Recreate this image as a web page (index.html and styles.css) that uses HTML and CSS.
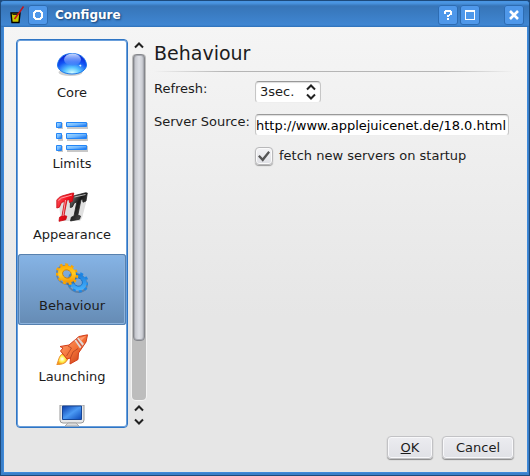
FILE: index.html
```html
<!DOCTYPE html>
<html lang="en">
<head>
<meta charset="utf-8">
<title>Configure</title>
<link rel="stylesheet" href="styles.css">
</head>
<body>
<div class="window">
  <header class="titlebar">
    <svg class="app-icon" width="16" height="18" viewBox="0 0 16 18">
      <path d="M2 7h9l-1 9.500H3z" fill="#c8c400" stroke="#000" stroke-width="1.4"/>
      <path d="M3.500 8.500h6" stroke="#222"/>
      <path d="M14.500 .5 10 7l-4.500 6" fill="none" stroke="#c4141c" stroke-width="1.500"/>
    </svg>
    <button class="tb-button" type="button">
      <svg width="20" height="20" viewBox="0 0 20 20" shape-rendering="crispEdges"><path d="M7 5h6v1h1v1h1v6h-1v1h-1v1H7v-1H6v-1H5V7h1V6h1zM8 7v1H7v4h1v1h4v-1h1V8h-1V7z" fill="#fff" fill-rule="evenodd"/></svg>
    </button>
    <h1 class="title">Configure</h1>
    <button class="tb-button" type="button">
      <svg width="20" height="20" viewBox="0 0 20 20" shape-rendering="crispEdges"><path d="M7 5h6v1h1v4h-2v1h-1v1H9v-2h2V9h1V7H8v2H6V6h1zM9 13h2v2H9z" fill="#fff"/></svg>
    </button>
    <button class="tb-button" type="button">
      <svg width="20" height="20" viewBox="0 0 20 20" shape-rendering="crispEdges"><path d="M5 5h10v10H5zM6 7v7h8V7z" fill="#fff" fill-rule="evenodd"/></svg>
    </button>
    <button class="tb-button tb-close" type="button">
      <svg width="20" height="20" viewBox="0 0 20 20"><path d="m6 6 8 8m0-8-8 8" stroke="#fff" stroke-width="2.600"/></svg>
    </button>
  </header>

  <main class="client">
    <div class="body">
      <div class="sidebar">
        <nav class="pages">
          <a class="page" href="#core">
            <svg width="32" height="32" viewBox="0 0 32 32">
              <defs>
                <radialGradient id="orb" cx=".5" cy=".95" r=".9"><stop offset="0" stop-color="#d8ffff"/><stop offset=".3" stop-color="#57c4ff"/><stop offset=".65" stop-color="#1252f4"/><stop offset="1" stop-color="#0a1cd0"/></radialGradient>
                <linearGradient id="orbTop" x2="0" y2="1"><stop offset="0" stop-color="#c9dcff"/><stop offset="1" stop-color="#3f78fb" stop-opacity=".5"/></linearGradient>
              </defs>
              <ellipse cx="14.500" cy="22.500" rx="12" ry="3.500" fill="#bbb" opacity=".7"/>
              <path d="M1.500 15C2 8 8 3.500 16 3.500s14 4.500 14.500 11.500c0 5-6 9-14.500 9s-14.500-4-14.500-9z" fill="url(#orb)" stroke="#1c78ea"/>
              <ellipse cx="16.500" cy="9.500" rx="8.500" ry="6" fill="url(#orbTop)"/>
              <path d="M23 15.500l1.500-1 1 1.200-1 1z" fill="#d6ecff"/>
            </svg>
            <span>Core</span>
          </a>
          <a class="page" href="#limits">
            <svg width="32" height="32" viewBox="0 0 32 32">
              <defs><linearGradient id="bar" x2="1" y2="1"><stop offset="0" stop-color="#a8dcff"/><stop offset=".5" stop-color="#72b9ff"/><stop offset="1" stop-color="#0868ee"/></linearGradient></defs>
              <path d="M2 2h5v6H2zM11 2h21v6H11zM2 14h5v6H2zM11 14h21v6H11zM2 25h5v6H2zM11 25h21v6H11z" fill="#c8c8c8"/>
              <g fill="url(#bar)" stroke="#2486f6"><path d="M.5 1.500h5v5h-5z"/><path d="M10.500 1.500h20v4h-20z"/><path d="M.5 12.500h5v5h-5z"/><path d="M10.500 12.500h20v5h-20z"/><path d="M.5 24.500h5v5h-5z"/><path d="M10.500 24.500h20v4h-20z"/></g>
            </svg>
            <span>Limits</span>
          </a>
          <a class="page" href="#appearance">
            <svg width="32" height="32" viewBox="0 0 32 32">
              <defs>
                <linearGradient id="red" x2="1" y2="1"><stop offset="0" stop-color="#ff6a72"/><stop offset=".4" stop-color="#f5121e"/><stop offset="1" stop-color="#b80008"/></linearGradient>
                <linearGradient id="black" x2="1" y2="1"><stop offset="0" stop-color="#999"/><stop offset=".4" stop-color="#181818"/><stop offset="1" stop-color="#666"/></linearGradient>
              </defs>
              <path d="m3 13 2-5 25-4v7l-4 15-2 3H5z" fill="#999" opacity=".3"/>
              <path d="M14.500 7.500Q16 4 19 3.500L29.500.8 31.300 1l-1.300 8-3 1.200-.5-3-1.500.6-3.200 15.400 2.700.8-1 3.200-9 1.800.8-3.800 2.700-1.200 2.800-14-2.500 1-2 4-2 .5z" fill="url(#black)" stroke="#222" stroke-width=".8"/>
              <path d="M.8 8Q3 4.800 6 4L15.500 1.300 17.800 1l-1.300 8.200-3 1.300-.5-3-2 .6-3 15.400 2.800.7-1 3.500L3 29.300l.5-4 2.500-1.200L8.500 9.500l-3 1-2.200 4.800-2.500.7z" fill="url(#red)" stroke="#c80812" stroke-width=".8"/>
              <path d="M2.500 8.500 5.500 6 16 3M9.500 8 7 24" fill="none" stroke="#ff9da2" stroke-width="1"/>
              <path d="m18.500 5 11-2.500" stroke="#bbb"/>
            </svg>
            <span>Appearance</span>
          </a>
          <a class="page page-current" href="#behaviour" aria-current="page">
            <svg width="32" height="32" viewBox="0 0 32 32">
              <defs>
                <linearGradient id="gold" x2="1" y2="1"><stop offset="0" stop-color="#ffa800"/><stop offset=".5" stop-color="#ffcc22"/><stop offset="1" stop-color="#f59200"/></linearGradient>
                <linearGradient id="blueGear" x2="1" y2="1"><stop offset="0" stop-color="#1678d8"/><stop offset="1" stop-color="#48b4ff"/></linearGradient>
              </defs>
              <g fill="none" transform="translate(22 19) rotate(35) scale(1 .86)">
                <circle r="10" cy="1.500" stroke="#345" stroke-opacity=".35" stroke-width="2"/>
                <circle r="10" pathLength="20" stroke="#1e86e4" stroke-width="3" stroke-dasharray="1 1"/>
                <circle r="6.800" stroke="url(#blueGear)" stroke-width="4.600"/>
                <circle r="4.600" stroke="#1268bc" stroke-width=".8"/>
              </g>
              <g fill="none" transform="translate(11 11) rotate(35) scale(1 .86)">
                <circle r="10" cy="1.500" stroke="#444" stroke-opacity=".35" stroke-width="2"/>
                <circle r="10.300" pathLength="22" stroke="#faa500" stroke-width="3" stroke-dasharray="1 1"/>
                <circle r="7" stroke="url(#gold)" stroke-width="5"/>
                <circle r="4.600" stroke="#c97800" stroke-width=".8"/>
              </g>
            </svg>
            <span>Behaviour</span>
          </a>
          <a class="page" href="#launching">
            <svg width="32" height="32" viewBox="0 0 32 32">
              <defs>
                <linearGradient id="hull" x2="1" y2="1"><stop offset="0" stop-color="#ffa878"/><stop offset=".5" stop-color="#f47238"/><stop offset="1" stop-color="#bc3010"/></linearGradient>
                <radialGradient id="flame"><stop offset="0" stop-color="#fff"/><stop offset=".55" stop-color="#fff04a"/><stop offset="1" stop-color="#f29a18"/></radialGradient>
              </defs>
              <path d="M.8 30.500C2.500 28 2.500 21.500 7 19.500l4.500 5.500c-1 4-5 5.500-10.700 5.500z" fill="url(#flame)" stroke="#ed8d2a"/>
              <path d="M4 12.500 13 11 23 2.500 31.500 .8 30 8l-7.500 11-.5 6.500-8 4.500 .5-6-3.500 1-6.500-8 2.500-3z" fill="url(#hull)" stroke="#d23c18" stroke-width="1"/>
              <path d="m18.500 6.500 5.500 8 4-4.500-5.500-6.500z" fill="#e0d8d4"/>
              <path d="m20.500 5 5.500 7.500" fill="none" stroke="#d8593a" stroke-width="1.500"/>
              <path d="M12 12l3.500 2-5 8m4 2 2.500-6 5-3.500" fill="none" stroke="#a93c20" stroke-width=".7"/>
              <path d="m24 4 6-2-5 5z" fill="#ff9a70"/>
            </svg>
            <span>Launching</span>
          </a>
          <a class="page" href="#display">
            <svg width="32" height="32" viewBox="0 0 32 32">
              <defs><linearGradient id="screen" x2="1" y2="1"><stop offset="0" stop-color="#0a3aa8"/><stop offset=".5" stop-color="#4b9af4"/><stop offset="1" stop-color="#0c48b8"/></linearGradient></defs>
              <path d="M4 0h24v15q0 3-3 3H7q-3 0-3-3z" fill="#e8e8e8" stroke="#999"/>
              <path d="M6.500 1h19v13.500h-19z" fill="url(#screen)" stroke="#174798"/>
              <path d="M12 18h8l3 3H9z" fill="#ddd" stroke="#aaa"/>
            </svg>
          </a>
        </nav>
        <div class="scrollbar">
          <button class="arrow" type="button"><svg width="10" height="7" viewBox="0 0 10 7"><path d="m1 5.500 4-4 4 4"/></svg></button>
          <div class="track"><div class="thumb"></div></div>
          <button class="arrow" type="button"><svg width="10" height="7" viewBox="0 0 10 7"><path d="m1 5.500 4-4 4 4"/></svg></button>
          <button class="arrow" type="button"><svg width="10" height="7" viewBox="0 0 10 7"><path d="m1 1.500 4 4 4-4"/></svg></button>
        </div>
      </div>

      <section class="panel">
        <h2 class="heading">Behaviour</h2>
        <form class="form">
          <label for="refresh">Refresh:</label>
          <div class="spin field">
            <input id="refresh" type="text" value="3sec.">
            <svg width="12" height="18" viewBox="0 0 12 18"><path d="m2 6.500 4-4 4 4m-8 5 4 4 4-4"/></svg>
          </div>
          <label for="source">Server Source:</label>
          <input class="field source" id="source" type="text" value="http://www.applejuicenet.de/18.0.html">
          <div class="check">
            <input id="fetch" type="checkbox" checked>
            <label for="fetch">fetch new servers on startup</label>
          </div>
        </form>
      </section>
    </div>

    <footer class="actions">
      <button class="button" type="button"><u>O</u>K</button>
      <button class="button button-wide" type="button">Cancel</button>
    </footer>
  </main>
</div>
</body>
</html>
```

FILE: styles.css
```css
* {
  box-sizing: border-box;
}

body {
  margin: 0;
  background: #1d4a7c;
  color: #1c1c1c;
  font: 13px/16px "DejaVu Sans", sans-serif;
}

button,
input {
  margin: 0;
  padding: 0;
  border: 0;
  color: inherit;
  font: inherit;
}

.window {
  display: flex;
  flex-direction: column;
  height: 100vh;
  padding: 0 1px 2px 2px;
  border: 1px solid #1d4a7c;
  border-radius: 4px 4px 0 0;
  background: #3b80c9;
}

.titlebar {
  display: flex;
  flex: none;
  align-items: center;
  gap: 2px;
  height: 26px;
  margin: 0 -1px 0 -2px;
  padding: 1px 5px 0 8px;
  border-radius: 3px 3px 0 0;
  background: linear-gradient(#4a95e2 0, #4a95e2 2px, #3775b8 5px, #3f86d2 24px, #2d70b8);
}

.app-icon {
  margin-right: 1px;
}

.tb-button {
  display: grid;
  place-items: center;
  width: 20px;
  height: 20px;
  border-radius: 3px;
  background: #4f98ea;
  box-shadow: inset 0 0 0 1px #2d6cb2;
}

.tb-close {
  margin-left: 22px;
}

.title {
  flex: 1;
  margin: 0;
  padding-left: 5px;
  color: #fff;
  font-size: 12px;
  font-weight: bold;
  text-shadow: 1px 1px 2px #163f70;
}

.client {
  display: flex;
  flex: 1;
  flex-direction: column;
  min-height: 0;
  padding: 12px 13px 13px 12px;
  border: 1px solid #3f8ada;
  border-top: 0;
  background: linear-gradient(#f5f5f5, #eee 30%, #e6e6e6 65%);
}

.body {
  display: flex;
  flex: 1;
  gap: 8px;
  min-height: 0;
}

.sidebar {
  display: flex;
  gap: 4px;
}

.pages {
  width: 112px;
  padding: 1px 0;
  overflow: hidden;
  border: 1px solid #2f75c4;
  border-radius: 4px;
  background: #fff;
  box-shadow: inset 0 0 0 1px #6a9fdb;
}

.page {
  display: flex;
  flex-direction: column;
  align-items: center;
  gap: 3px;
  height: 71px;
  margin: 0 1px;
  padding-top: 9px;
  border-radius: 3px;
  color: inherit;
  text-decoration: none;
}

.page-current {
  background: linear-gradient(#86b4e6, #658bb4);
  box-shadow: inset 0 0 0 1px #5681b0, inset 0 0 0 2px #8cb2dc;
}

.scrollbar {
  display: flex;
  flex-direction: column;
  width: 14px;
}

.arrow {
  display: grid;
  place-items: center;
  height: 13px;
  background: none;
}

.arrow path,
.spin path {
  fill: none;
  stroke: #222;
  stroke-width: 2;
}

.track {
  flex: 1;
  margin: 2px 0;
  border-radius: 4px;
  background: #bdbdbd;
  box-shadow: 0 0 0 1px #f3f3f3;
}

.thumb {
  height: 83%;
  margin: 0 1px;
  border: 1px solid #85878c;
  border-radius: 4px;
  background: linear-gradient(90deg, #bdbfc6, #dddfe5 50%, #d0d2d8 75%, #b2b4ba);
  box-shadow: inset 0 0 0 1px #a9abb2;
}

.panel {
  flex: 1;
  min-width: 0;
}

.heading {
  margin: 0;
  padding: 3px 0 7px;
  border-bottom: 1px solid;
  border-image: linear-gradient(90deg, transparent, #b5b5b5 20%, #b5b5b5 80%, transparent) 1;
  font-size: 19px;
  font-weight: normal;
  line-height: 22px;
}

.form {
  display: grid;
  grid-template-columns: 93px 1fr;
  gap: 11px 8px;
  padding: 9px 5px 0 0;
  white-space: nowrap;
}

.field {
  height: 22px;
  border: 1px solid #c6c6c6;
  border-top-color: #999;
  border-bottom-color: #eee;
  border-radius: 4px;
  background: #fff;
  box-shadow: inset 0 1px 1px #ddd;
}

.spin {
  display: flex;
  align-items: center;
  width: 66px;
  padding: 0 3px 0 4px;
}

.spin input {
  flex: 1;
  width: 0;
  background: none;
}

.spin svg {
  flex: none;
}

.source {
  width: 100%;
  color: #000;
}

.check {
  display: flex;
  grid-column: 2;
  align-items: center;
  gap: 6px;
}

.check input {
  display: grid;
  place-items: center;
  width: 18px;
  height: 18px;
  border: 1px solid #b8b8ba;
  border-radius: 4px;
  background: linear-gradient(#f3f3f5, #dfe0e5);
  box-shadow: inset 0 0 0 1px #fafafa, 0 1px 1px #999;
  appearance: none;
}

.check input:checked::before {
  width: 12px;
  height: 12px;
  background: #555;
  clip-path: polygon(0 55%, 14% 42%, 38% 66%, 86% 8%, 100% 20%, 40% 98%);
  content: "";
}

.actions {
  display: flex;
  flex: none;
  justify-content: flex-end;
  gap: 9px;
  padding-top: 8px;
}

.button {
  min-width: 46px;
  height: 23px;
  border: 1px solid #c2c2c5;
  border-radius: 4px;
  background: linear-gradient(#ececf0, #e0e1e6);
  box-shadow: inset 0 0 0 1px #f8f8fa, 0 1px 1px #888;
}

.button-wide {
  min-width: 72px;
}
```
